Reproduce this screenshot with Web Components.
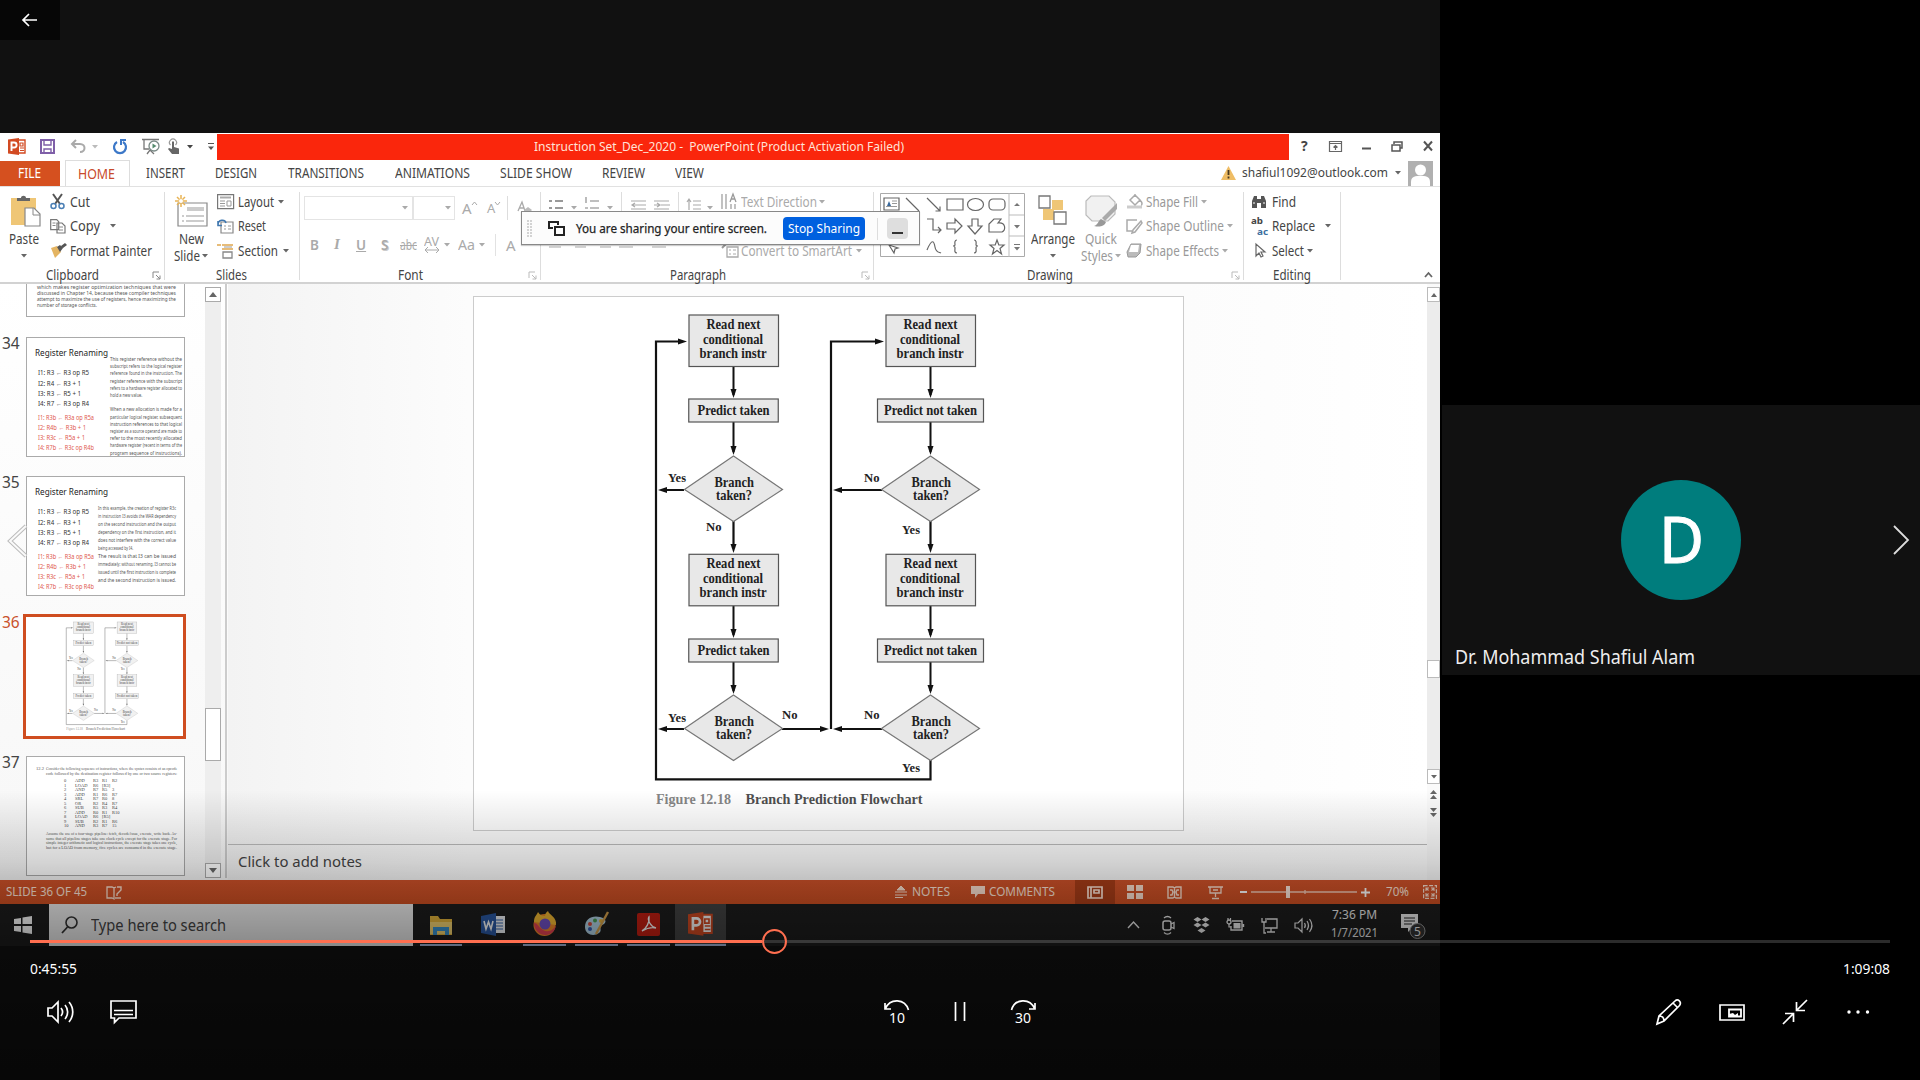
<!DOCTYPE html>
<html lang="en"><head><meta charset="utf-8"><title>Lecture recording</title>
<style>
html,body{margin:0;width:1920px;height:1080px;overflow:hidden;background:#000;font-family:"Noto Sans","Open Sans",sans-serif}
</style></head><body>
<lecture-player></lecture-player>
<script>
const BASE=`*{box-sizing:border-box}:host{display:block;flex:none}.row{display:flex;align-items:center}.c{flex:none;display:flex;align-items:center}svg{display:block;flex:none;overflow:visible}`;
const define=(name,css,html)=>customElements.define(name,class extends HTMLElement{
  constructor(){super();const r=this.attachShadow({mode:'open'});r.innerHTML=`<style>${BASE}${css}</style>`+(typeof html==='function'?html(this):html)}
});
// A label squeezed or stretched to a given width
customElements.define('fit-text',class extends HTMLElement{
  constructor(){super();this.attachShadow({mode:'open'}).innerHTML=`<style>:host{display:block;flex:none;white-space:nowrap}span{display:inline-block;transform-origin:0 50%}</style><span><slot></slot></span>`}
  connectedCallback(){const w=+this.getAttribute('w');this.style.width=w+'px';const s=this.shadowRoot.querySelector('span');const n=s.offsetWidth;if(n){s.style.transform=`scaleX(${w/s.getBoundingClientRect().width})`}}
});
const svg=(w,h,inner,extra='')=>`<svg width="${w}" height="${h}" viewBox="0 0 ${w} ${h}" fill="none" ${extra}>${inner}</svg>`;
const t=(w,s,style='')=>`<fit-text w="${w}" style="${style}">${s}</fit-text>`;
const row=(h,items,start=0,style='')=>{let x=start;return `<div class="row" style="height:${h}px;${style}">`+items.map(([a,w,html,st=''])=>{const m=a-x;x=a+w;return `<div class="c" style="margin-left:${m}px;width:${w}px;${st}">${html}</div>`}).join('')+'</div>'};
const tri=(c='#666')=>svg(6,4,`<path d="M0 0h6L3 3.5z" fill="${c}"/>`);
const launcher=(c='#888')=>svg(9,9,`<path d="M1 7V1h6M4 4l4 4M8 4.5V8H4.5" stroke="${c}"/>`);

/* ---------- title bar ---------- */
const pIcon=`<path d="M10 2h7v13h-7z" fill="#fff" stroke="#d24a22" stroke-width="1.4"/><path d="M12 5h3v3h-3zM12 10h4M12 12.5h4" stroke="#d24a22" stroke-width="1.2"/><path d="M0 1.6L11 0v17L0 15.4z" fill="#d24a22"/><path d="M3.5 13V4.500h2.600a2.400 2.400 0 0 1 0 5H3.500" stroke="#fff" stroke-width="1.900"/>`;
define('ppt-titlebar',`:host{height:27px;background:#fff}`,
 row(27,[
 [8,17,svg(17,17,pIcon)],
 [40,15,svg(15,15,'<path d="M1 1h13v13H1z" stroke="#7f5fa8" stroke-width="2"/><path d="M4 1v5h7V1M4 14v-4h7v4" stroke="#7f5fa8" stroke-width="1.4"/>')],
 [70,17,svg(17,15,'<path d="M6 1L2 5l4 4M2 5h8c6 0 6 8 0 8" stroke="#aaa" stroke-width="2"/>')],
 [92,6,tri('#bbb')],
 [112,16,svg(16,16,'<path d="M5 3a6 6 0 1 0 6 0" stroke="#3c78c8" stroke-width="2.200"/><path d="M9 6V1h5" stroke="#3c78c8" stroke-width="2"/>')],
 [142,19,svg(19,17,'<path d="M0 1.500h17M2 2v9h5M5 16l3-4 4 4" stroke="#777" stroke-width="1.300"/><circle cx="12" cy="8" r="5" stroke="#7a8a86" stroke-width="1.300" fill="#fff"/><path d="M10.500 5.500v5l4-2.500z" fill="#558b6e"/>')],
 [167,14,svg(14,17,'<path d="M3.500 7a3.500 3.500 0 1 1 5 0" stroke="#999" stroke-width="1.200"/><path d="M5 3.500h2V9l5 1.500V16H5L1 11l1-1 3 1z" fill="#666"/>')],
 [187,6,tri('#444')],
 [208,6,svg(6,8,'<path d="M0 .5h6" stroke="#555"/><path d="M0 3.500h6L3 7z" fill="#555"/>')],
 [217,1072,`<div style="padding-left:317px">${t(370,'Instruction Set_Dec_2020 -&nbsp; PowerPoint (Product Activation Failed)')}</div>`,'height:26px;background:#fa260c;color:#ffe3d8;font-size:12.5px'],
 [1301,9,`<b style="font-size:14px;line-height:20px;margin-top:-2px;color:#444">?</b>`],
 [1329,13,svg(13,11,'<path d="M.5.5h12v10H.5zM.5 2.500h12M6.500 9V5M4.500 6.500l2-2 2 2" stroke="#666" stroke-width="1.200"/>')],
 [1362,9,svg(9,11,'<path d="M0 7.500h9" stroke="#555" stroke-width="2"/>')],
 [1391,12,svg(12,11,'<path d="M3 3V1h8v6H9M1 4h8v6H1z" stroke="#555" stroke-width="1.500"/>')],
 [1423,10,svg(10,10,'<path d="M1 .5l8 9M9 .5l-8 9" stroke="#555" stroke-width="2"/>','style="margin-top:-2px"')]
 ]));
define('ppt-tabs',`:host{height:26px;background:#fff;color:#444;font-size:13.500px}`,
 row(26,[
 [0,60,`<div style="padding-left:18px">${t(23,'FILE')}</div>`,'height:25px;background:#d5501f;color:#fff'],
 [65,65,`<div style="padding-left:12px;color:#c8492a">${t(37,'HOME')}</div>`,'height:26px;border:1px solid #ddd;border-bottom:0'],
 [146,39,t(39,'INSERT')],[215,42,t(42,'DESIGN')],[288,76,t(76,'TRANSITIONS')],[395,75,t(75,'ANIMATIONS')],[500,72,t(72,'SLIDE SHOW')],[602,43,t(43,'REVIEW')],[675,29,t(29,'VIEW')],
 [1221,15,svg(15,14,'<path d="M7.500 0L15 14H0z" fill="#efbd65"/><path d="M7.500 4v5M7.500 10.500v2" stroke="#4a3a20" stroke-width="1.800"/>')],
 [1242,146,t(146,'shafiul1092@outlook.com','font-size:13px;margin-top:-2px')],[1395,6,tri()],
 [1408,25,svg(25,25,'<path d="M0 0h25v25H0z" fill="#b0b0b0"/><circle cx="12.500" cy="9" r="5.500" fill="#fff"/><path d="M3 25v-4c0-6 5-6 9.500-6s9.500 0 9.500 6v4z" fill="#fff"/>')]
 ]));

/* ---------- ribbon ---------- */
define('ribbon-group',`:host{height:98px;display:flex;flex-direction:column}
.body{height:80px;padding-top:3.500px;display:flex}.foot{height:18px;display:flex;align-items:center}
:host([line]) {background:linear-gradient(#ddd,#ddd) right 6px/1px 88px no-repeat}`,
 `<div class="body"><slot></slot></div><div class="foot"><slot name="foot"></slot></div>`);
const big=(ml,w,icon,l1,l2,color='#444')=>`<div style="margin-left:${ml}px;width:${w}px;padding-top:5px;display:flex;flex-direction:column;align-items:center;color:${color}"><div style="height:36px">${icon}</div><div style="height:17px;display:flex;align-items:center">${l1}</div><div style="height:17px;display:flex;align-items:center;gap:2px">${l2}</div></div>`;
const col=(ml,rows,color='inherit')=>`<div style="margin-left:${ml}px;color:${color}">${rows}</div>`;
const H=24.5;
const foot=(items,start)=>`<div slot="foot">${row(18,items,start)}</div>`;
const G='#aaa';
define('ppt-ribbon',`:host{height:98px;background:#fff;border-top:1px solid #e1e1e1;border-bottom:2px solid #d2d2d2;color:#444;font-size:13.500px;display:flex}ribbon-group{margin-top:-1px}.c b{font-weight:600}`,
`<ribbon-group line style="width:165px">
${big(7,34,svg(32,32,'<path d="M1 3h25v27H1z" fill="#efc676"/><path d="M7 6V3h4c0-3 5-3 5 0h4v3z" fill="#666"/><path d="M15 13h9l6 6v12H15z" fill="#fff" stroke="#888" stroke-width="1.200"/><path d="M23 13v7h7" stroke="#888"/>','style="margin-left:3px"'),t(30,'Paste'),tri())}
${col(9,row(H,[[50,16,svg(16,15,'<path d="M3 0l7 10M12 0L5 10" stroke="#555" stroke-width="2"/><circle cx="3.500" cy="12" r="2.500" stroke="#4a7fb5" stroke-width="1.500"/><circle cx="11.500" cy="12" r="2.500" stroke="#4a7fb5" stroke-width="1.500"/>')],[70,20,t(20,'Cut')]],50)
+row(H,[[50,16,svg(16,15,'<path d="M.7.7h6l2 2v8h-8zM7 4h5l3 3v7H7z" stroke="#777" stroke-width="1.200" fill="#fff"/><path d="M2.500 4h3M2.500 6.500h3M9 8h4M9 11h4" stroke="#888"/>')],[70,30,t(30,'Copy')],[110,6,tri()]],50)
+row(H,[[50,17,svg(17,15,'<path d="M1 5l6-2 4 6-6 6z" fill="#e4b462"/><path d="M7 4l3-2 3 3-3 4zM11 3l4-3 2 2-4 3z" fill="#555"/>')],[70,82,t(82,'Format Painter')]],50))}
${foot([[46,53,t(53,'Clipboard')],[152,9,launcher()]],0)}
</ribbon-group>
<ribbon-group line style="width:135px">
${big(9,34,svg(33,32,'<path d="M3 8h29v23H3z" fill="#fff" stroke="#888" stroke-width="1.200"/><path d="M12 14h17" stroke="#ccc" stroke-width="4"/><path d="M7 21h2M11 21h18M7 26h2M11 26h18" stroke="#999"/><path d="M6 0v12M0 6h12M2 2l8 8M10 2l-8 8" stroke="#e9b455" stroke-width="1.500"/><circle cx="6" cy="6" r="2" fill="#fff"/>'),t(25,'New'),t(26,'Slide')+tri())}
${col(9,row(H,[[217,17,svg(17,15,'<path d="M.6.6h16v14H.6z" stroke="#777" stroke-width="1.200"/><path d="M3 3.500h11" stroke="#aaa" stroke-width="2"/><path d="M3 7h5M3 9.500h5M3 12h5M10 7h4v5h-4z" stroke="#999"/>')],[238,36,t(36,'Layout')],[278,6,tri()]],217)
+row(H,[[217,17,svg(17,15,'<path d="M4 3h12v11H4z" stroke="#888" stroke-width="1.200"/><path d="M7 7h2M11 7h3M7 10h2M11 10h3" stroke="#999"/><path d="M1 6c0-6 7-6 8-2M1 2v4.500h4" stroke="#3f77b0" stroke-width="1.600"/>')],[238,28,t(28,'Reset')]],217)
+row(H,[[217,17,svg(17,16,'<path d="M5 2h11M5 6h11M0 2h4" stroke="#e0a64e" stroke-width="1.600"/><path d="M6 9h9v6H6z" stroke="#888" stroke-width="1.300"/><path d="M7 4h8" stroke="#999"/>')],[238,40,t(40,'Section')],[283,6,tri()]],217))}
${foot([[216,31,t(31,'Slides')]],165)}
</ribbon-group>
<ribbon-group line style="width:241px;color:${G}">
<div>
${row(37,[[304,109,`<div style="margin-left:97px">${tri(G)}</div>`,'height:24px;border:1px solid #e4e4e4'],[413,42,`<div style="margin-left:31px">${tri(G)}</div>`,'height:24px;border:1px solid #e4e4e4'],[462,16,`<span style="font-size:15px">A</span>${svg(5,12,'<path d="M0 3l2.500-3L5 3" stroke="#aaa"/>')}`],[487,14,`<span style="font-size:13px">A</span>${svg(5,12,'<path d="M0 0l2.500 3L5 0" stroke="#aaa"/>')}`],[507,1,'','height:24px;background:#ddd'],[518,14,svg(14,14,'<path d="M0 10L4 1l3 9M1.500 7h5" stroke="#aaa" stroke-width="1.300"/><path d="M6 9l4-3 4 3-4 4H7z" fill="#bbb"/>')]],300)}
${row(36,[[310,9,`<b>B</b>`],[334,8,`<i style="font-family:'Liberation Serif';font-weight:bold;font-size:15px">I</i>`],[356,10,`<u><b>U</b></u>`],[381,9,`<b style="text-shadow:1px 1px #ccc">S</b>`],[400,17,t(17,'<s>abc</s>')],[424,17,`<div>${t(15,'AV','font-size:12px;line-height:11px')}${svg(16,6,'<path d="M1 3h14M4 0L1 3l3 3M12 0l3 3-3 3" stroke="#aaa"/>')}</div>`],[444,6,tri(G)],[458,17,t(17,'Aa')],[479,6,tri(G)],[495,1,'','height:22px;background:#e2e2e2'],[506,10,'<span style="font-size:15px">A</span>']],300)}
</div>
${foot([[398,25,t(25,'Font','color:#444')],[528,9,launcher('#bbb')]],300)}
</ribbon-group>
<ribbon-group line style="width:333px;color:${G}">
<div>
${row(H,[[549,14,svg(14,16,'<path d="M0 7h3M6 7h8M0 14h3M6 14h8" stroke="#999" stroke-width="1.800"/>')],[571,6,svg(6,16,'<path d="M0 12h6l-3 3.500z" fill="#aaa"/>')],[585,14,svg(14,16,'<path d="M1 3v6M0 14h3M5 7h9M5 14h9" stroke="#aaa" stroke-width="1.600"/>')],[607,6,svg(6,16,'<path d="M0 12h6l-3 3.500z" fill="#aaa"/>')],[621,1,'','height:20px;background:#ddd'],[631,15,svg(15,16,'<path d="M0 7h15M6 11h9M0 15h15M1 11h5M4 9L1 11l3 2" stroke="#aaa" stroke-width="1.200"/>')],[654,16,svg(16,16,'<path d="M0 7h15M7 11h9M0 15h15M0 11h5M3 9l3 2-3 2" stroke="#aaa" stroke-width="1.200"/>')],[678,1,'','height:20px;background:#ddd'],[686,15,svg(15,16,'<path d="M3 6v10M1 8l2-3 2 3M7 7h8M7 11h8M7 15h8" stroke="#aaa" stroke-width="1.200"/>')],[707,6,svg(6,16,'<path d="M0 12h6l-3 3.500z" fill="#aaa"/>')],[721,17,svg(17,16,'<path d="M1 0v15M5 0v15M10 10v5M14 10v5" stroke="#999" stroke-width="1.200"/><path d="M9 8l3-8 3 8M10 5h4" stroke="#999" stroke-width="1.300"/>')],[741,76,t(76,'Text Direction')],[819,6,tri(G)]],541)}
${row(H,[],541)}
${row(H,[[549,12,svg(12,10,'<path d="M0 1h12" stroke="#aaa"/>')],[575,11,svg(11,10,'<path d="M0 1h11" stroke="#aaa"/>')],[600,11,svg(11,10,'<path d="M0 1h11" stroke="#aaa"/>')],[619,14,svg(14,10,'<path d="M0 1h14" stroke="#aaa"/>')],[652,14,svg(14,10,'<path d="M0 1h14" stroke="#aaa"/>')],[722,17,svg(17,14,'<path d="M5 3h11v10H5z" stroke="#aaa" stroke-width="1.300"/><path d="M7 6h2M11 6h3M7 10h2M11 10h3" stroke="#aaa"/><path d="M0 4l4-4" stroke="#999" stroke-width="2"/>')],[741,111,t(111,'Convert to SmartArt')],[856,6,tri(G)]],541)}
</div>
${foot([[670,56,t(56,'Paragraph','color:#444')],[861,9,launcher('#bbb')]],541)}
</ribbon-group>
<ribbon-group line style="width:370px">
<div style="margin:3px 0 0 6px">${svg(145,64,`<path d="M.5.5h144v63H.5z" stroke="#aaa"/><path d="M129 0v64M129 22h15M129 43h15" stroke="#bbb"/><path d="M134 13l3-3 3 3zM134 32h6l-3 3.500zM134 54h6l-3 3.500z" fill="#777"/><path d="M134 51.500h6" stroke="#777"/>
<g stroke="#666" stroke-width="1.200"><path d="M4 5h15v12H4z"/><path d="M12 8h5M12 10.500h5M6 13.500h11" stroke="#999"/><path d="M7 13l2-5 2 5z" fill="#39699c" stroke="none"/><path d="M26 5l13 13M47 5l13 13M60 13.500V18h-4.500M67 6h16v11H67z"/><ellipse cx="95.500" cy="11.500" rx="8" ry="6"/><rect x="109" y="6" width="16" height="11" rx="4"/>
<path d="M47 26h6v11h8M58 34l3 3-3 3M67 30h8v-4l7 7-7 7v-4h-8zM92 26h6v7h4l-7 8-7-8h4zM109 39V31l5-5h7l-3 4c8-1 8 7 4 9z"/><path d="M47 57c5-12 7-9 8-3s4 5 6 6M77 47c-3 0-2 4-2 5s-2 1-2 1 2 0 2 2-1 5 2 5M94 47c3 0 2 4 2 5s2 1 2 1-2 0-2 2 1 5-2 5" /><path d="M117 47l1.800 5h5.200l-4 3.500 1.500 5.500-4.500-3.500-4.500 3.500 1.500-5.500-4-3.500h5.200zM9 52l5 8 1-4 3-1z"/></g>`)}</div>
${big(5,45,svg(30,30,'<path d="M14 5h11v10H14zM5 14h11v11H5z" fill="#efc676"/><path d="M1 1h11v12H1zM16 17h12v12H16z" fill="#fff" stroke="#777" stroke-width="1.300"/>'),t(44,'Arrange'),tri())}
${big(6,40,svg(33,33,'<path d="M6 1h18l6 6v12l-7 7H7l-6-6V6z" fill="#f1f1f1" stroke="#bbb" stroke-width="1.200"/><path d="M32 8L17 23l3 3L32 14z" fill="#aaa"/><path d="M16 24l5 3c-2 5-7 5-12 4 4-1 4-5 7-7z" fill="#999"/>'),t(32,'Quick'),t(32,'Styles')+tri(G),'#999')}
${col(5,row(H,[[1127,17,svg(17,16,'<path d="M1 13h15" stroke="#ccc" stroke-width="3"/><path d="M4 6l5-5 5 5-5 5zM9 1V0M14 6c3 3 2 5 1 5" stroke="#aaa" stroke-width="1.500"/>')],[1147,52,t(52,'Shape Fill')],[1202,6,tri(G)]],1127)
+row(H,[[1127,17,svg(17,15,'<path d="M11 1H1v11h5M15 2L7 11l-1 3 3-1 7-9z" stroke="#aaa" stroke-width="1.500"/>')],[1147,78,t(78,'Shape Outline')],[1228,6,tri(G)]],1127)
+row(H,[[1127,17,svg(17,15,'<path d="M5 1h10l-1 9-4 4H2L1 9z" fill="#bbb" stroke="#999"/><path d="M5 2h8l-1 7H3z" fill="#fff"/>')],[1147,73,t(73,'Shape Effects')],[1223,6,tri(G)]],1127),'#999')}
${foot([[1027,46,t(46,'Drawing')],[1231,9,launcher('#bbb')]],874)}
</ribbon-group>
<ribbon-group line style="width:97px">
${col(7,row(H,[[1251,16,svg(16,15,'<path d="M1 7l2-5h3v3h4V2h3l2 5v7h-5V9H6v5H1z" fill="#555"/><path d="M2 9h2M12 9h2" stroke="#fff"/>')],[1272,24,t(24,'Find')]],1251)
+row(H,[[1251,17,`<div style="font-size:8px;line-height:11px;font-weight:bold"><div style="height:11px">${t(12,'ab')}</div><div style="height:11px;padding-left:6px;color:#3d6f9f">${t(11,'ac')}</div></div>`],[1272,43,t(43,'Replace')],[1325,6,tri()]],1251)
+row(H,[[1255,11,svg(11,15,'<path d="M1 1v12l3-3 2 4 2-1-2-4h4z" stroke="#666" stroke-width="1.200"/>')],[1272,32,t(32,'Select')],[1307,6,tri()]],1251))}
${foot([[1273,38,t(38,'Editing')]],1244)}
</ribbon-group>
<ribbon-group style="width:99px">
${foot([[1424,9,svg(9,6,'<path d="M1 5l3.500-4L8 5" stroke="#666" stroke-width="1.800"/>')]],1341)}
</ribbon-group>`);

/* ---------- flow chart ---------- */
const st=(x,w,y,s,sz=14)=>`<text x="${x}" y="${y}" textLength="${w}" lengthAdjust="spacingAndGlyphs" font-size="${sz}">${s}</text>`;
const arrow=(x,y,d)=>({d:`<path d="M${x} ${y}l-3-9h6z"/>`,l:`<path d="M${x} ${y}l9-3v6z"/>`,r:`<path d="M${x} ${y}l-9-3v6z"/>`}[d]).replace('/>',' fill="#111" stroke="none"/>');
const column=(cx,pl,pw,ptxt)=>{let s='';for(const [a,b,c] of [[315,399,456],[554.3,639,695]]){
 s+=`<path d="M${cx} ${a+51}V${b-4}M${cx} ${b+23}V${c-4}" stroke="#111" stroke-width="2"/>`+arrow(cx,b-1,'d')+arrow(cx,c-1,'d')
 +`<rect x="${cx-44.5}" y="${a}" width="89.500" height="51.500" fill="#e8e8e8" stroke="#555" stroke-width="1.200"/><rect x="${cx-pw/2}" y="${b}" width="${pw}" height="23" fill="#e8e8e8" stroke="#555" stroke-width="1.200"/><path d="M${cx} ${c}l49 33.500-49 32-49-32z" fill="#e8e8e8" stroke="#777" stroke-width="1.200"/>`
 +st(cx-27,54,a+14,'Read next')+st(cx-30.5,60,a+28.5,'conditional')+st(cx-34,67,a+42.7,'branch instr')+st(cx-pl/2,pl,b+15.7,ptxt)+st(cx-19,39.5,c+30.5,'Branch')+st(cx-17.5,36,c+44,'taken?')}
 return s};
define('flow-chart',`:host{width:710px;height:534px}svg{width:100%;height:100%}text{font-family:"Liberation Serif",serif;font-weight:bold;fill:#222}`,
`<svg viewBox="474 297 710 534" fill="none">
<path d="M680 341.500H656V779.300H930.500V760M878 341.500H831V729M733.500 521V548M930.500 521V548M684 490H664M882 490H840M684 729H664M782 729H822M882 729H840" stroke="#111" stroke-width="2.200"/>
${arrow(687,341.5,'r')}${arrow(884,341.5,'r')}${arrow(733.5,553,'d')}${arrow(930.5,553,'d')}${arrow(658,490,'l')}${arrow(833,490,'l')}${arrow(658,729,'l')}${arrow(833,729,'l')}${arrow(829,729,'r')}
${column(733.5,72,89.5,'Predict taken')}${column(930.5,93,106,'Predict not taken')}
${st(668,18,482,'Yes',13.5)}${st(706,15.500,531,'No',13.5)}${st(864,15.500,482,'No',13.5)}${st(902,18,534,'Yes',13.5)}${st(668,18,721.5,'Yes',13.5)}${st(782,15.500,718.5,'No',13.5)}${st(864,15.500,718.5,'No',13.5)}${st(902,18,771.5,'Yes',13.5)}
<g style="opacity:.55">${st(656,75,803.5,'Figure 12.18',15)}</g><g style="opacity:.8">${st(745.5,177,803.5,'Branch Prediction Flowchart',15)}</g></svg>`);

/* ---------- thumbnails ---------- */
const para=(x,w,y,dy,lines)=>lines.map((l,i)=>{if(!l)return '';const ww=l.length<23?w*.45:w,k=ww/(l.length*2.75);return `<g transform="translate(${x} ${y+i*dy}) scale(${k.toFixed(3)} 1)"><text textLength="${(ww/k).toFixed(2)}" lengthAdjust="spacingAndGlyphs" font-size="4.600" fill="#555">${l}</text></g>`}).join('');
const instr=(a)=>a.map(([y,s,c,w])=>`<text x="11" y="${y}" textLength="${w}" lengthAdjust="spacingAndGlyphs" font-size="6.200" fill="${c}">${s}</text>`).join('');
const list=instr([[37,'I1: R3 ← R3 op R5','#333',51],[47.5,'I2: R4 ← R3 + 1','#333',43],[57.500,'I3: R3 ← R5 + 1','#333',43],[68,'I4: R7 ← R3 op R4','#333',51],[82,'I1: R3b ← R3a op R5a','#e05a50',56],[92,'I2: R4b ← R3b + 1','#e05a50',48],[101.500,'I3: R3c ← R5a + 1','#e05a50',47],[112,'I4: R7b ← R3c op R4b','#e05a50',56]]);
const title='<text x="8" y="18" textLength="73" lengthAdjust="spacingAndGlyphs" font-size="8.500" fill="#222">Register Renaming</text>';
const th=(n,h,inner,hot=false,x='')=>`<div class="r ${hot?'rh':''}"><div class="n">${n}</div><div class="${hot?'hot':'th'}" style="height:${h}px;${x}">${inner}</div></div>`;
const btn=(d)=>`<div class="b">${svg(8,5,d>0?'<path d="M0 0h8L4 5z" fill="#666"/>':'<path d="M0 5h8L4 0z" fill="#666"/>')}</div>`;
define('slide-strip',`:host{width:228px;height:596px;display:flex;background:linear-gradient(#fff,#f7f7f7);overflow:hidden}
.list{width:205px;display:flex;flex-direction:column;gap:19.500px;flex:none}.r{display:flex}.rh{margin:-2px 0 -2.500px}.n{width:26px;padding-left:2px;font-size:15.500px;line-height:20px;margin-top:-4px;color:#444;flex:none}.rh .n{color:#c9512b;margin-top:-2px}.th{width:159px;border:1px solid #aaa;background:#fff}.hot{width:163px;margin-left:-3px;border:3px solid #cf4d20;background:#fff;padding-top:1px}
.sb{width:16px;margin-top:3px;height:591px;background:#eee;display:flex;flex-direction:column;align-items:center}.b,.thumb{width:16px;height:15px;border:1px solid #aaa;background:#fff;display:flex;align-items:center;justify-content:center}.thumb{height:53px}.sp{flex:1}
.line{width:2px;background:#ccc;margin-left:4px;height:594px}flow-chart{width:157px;height:118px;opacity:.6}svg text{font-family:"Noto Sans"}.se text{font-family:"Liberation Serif"}`,
`<div class="list">
${th('',33,svg(157,32,para(10,139,5,6,['which makes register optimization techniques that were','discussed in Chapter 14, because these compiler techniques','attempt to maximize the use of registers, hence maximizing the'])+para(10,60,23,6,['number of storage conflicts.'])),false,'border-top:0')}
${th('34',120,svg(157,118,title+list+para(83,72,23,7.2,['This register reference without the','subscript refers to the logical register','reference found in the instruction. The','register reference with the subscript','refers to a hardware register allocated to','hold a new value.','','When a new allocation is made for a','particular logical register, subsequent','instruction references to that logical','register as a source operand are made to','refer to the most recently allocated','hardware register (recent in terms of the','program sequence of instructions).'])))}
${th('35',120,svg(157,118,title+list+para(71,78,33,8,['In this example, the creation of register R3c','in instruction I3 avoids the WAR dependency','on the second instruction and the output','dependency on the first instruction, and it','does not interfere with the correct value','being accessed by I4.','The result is that I3 can be issued','immediately; without renaming, I3 cannot be','issued until the first instruction is complete','and the second instruction is issued.'])))}
${th('36',125,'<flow-chart></flow-chart>',true)}
${th('37',120,`<div class="se">${svg(157,118,`<text x="9" y="13" font-size="4.600" fill="#555">12.2</text>`+para(19,131,13,4.8,['Consider the following sequence of instructions, where the syntax consists of an opcode','code followed by the destination register followed by one or two source registers:'])
+['ADD,R3;R1;R2','LOAD,R6;[R3];','AND,R7;R5;3','ADD,R1;R6;R7','SRL,R7;R0;8','OR,R2;R4;R7','SUB,R5;R3;R4','ADD,R0;R1;R10','LOAD,R6;[R5];','SUB,R2;R1;R6','AND,R3;R7;15'].map((s,i)=>{const[a,b]=s.split(',');const q=b.split(';');return `<g font-size="4.500" fill="#444"><text x="37" y="${25+i*4.5}">${i}</text><text x="48" y="${25+i*4.5}">${a}</text><text x="66" y="${25+i*4.5}">${q[0]}</text><text x="75" y="${25+i*4.5}">${q[1]}</text><text x="85" y="${25+i*4.5}">${q[2]}</text></g>`}).join('')
+para(19,131,78,4.6,['Assume the use of a four-stage pipeline: fetch, decode/issue, execute, write back. As-','sume that all pipeline stages take one clock cycle except for the execute stage. For','simple integer arithmetic and logical instructions, the execute stage takes one cycle,','but for a LOAD from memory, five cycles are consumed in the execute stage.']))}</div>`)}
</div><div class="sb">${btn(-1)}<div style="height:406px"></div><div class="thumb"></div><div class="sp"></div>${btn(1)}</div><div class="line"></div>`);

define('slide-stage',`:host{width:1212px;height:596px;display:flex;background:#fafafa}
.m{width:1199px;flex:none;background:linear-gradient(90deg,#f3f3f3,#fcfcfc 20%,#fcfcfc 80%,#fff)}.s{margin:12px 0 0 245px;width:711px;height:535px;border:1px solid #ccc;background:#fff}.notes{border-top:1px solid #bbb;margin-top:13px;height:36px;padding:0 0 3px 10px;display:flex;align-items:center;font-size:14.500px;color:#444}
.sb{width:13px;height:557px;display:flex;flex-direction:column;margin-top:3px}.tr{background:#ececec}.b{height:15px;width:13px;border:1px solid #bbb;background:#fff;display:flex;align-items:center;justify-content:center}.j{display:flex;justify-content:center}`,
`<div class="m"><div class="s"><flow-chart></flow-chart></div><div class="notes">${t(124,'Click to add notes')}</div></div>
<div class="sb"><div class="b">${svg(6,4,'<path d="M0 4h6L3 0z" fill="#666"/>')}</div><div class="tr" style="height:358px"></div><div class="b" style="height:18px"></div><div class="tr" style="height:91px"></div><div class="b">${tri()}</div><div class="j" style="height:18px;padding-top:6px">${svg(7,9,'<path d="M0 4h7L3.500 0zM0 9h7L3.500 5z" fill="#666"/>')}</div><div class="j" style="height:18px;padding-top:6px">${svg(7,9,'<path d="M0 0h7L3.500 4zM0 5h7L3.500 9z" fill="#666"/>')}</div></div>`);

/* ---------- status bar and taskbar ---------- */
define('ppt-status',`:host{height:24px;background:linear-gradient(#d0522a,#cf5022);color:#ffe6d8;font-size:12px}fit-text{margin-top:-1px}`,
 row(24,[[6,81,t(81,'SLIDE 36 OF 45')],[106,17,svg(17,13,'<path d="M1 1h5l2 1v11l-2-1H1zM8 2l2-1" stroke="#fbe0d0" stroke-width="1.300"/><path d="M11 1h4v3l-4 4v2M9 12h6" stroke="#fbe0d0" stroke-width="1.400"/>')],
 [895,12,svg(12,12,'<path d="M6 0l4 4H2zM0 6h12M0 9h12M0 11.500h8" fill="#fbe0d0" stroke="#fbe0d0"/>')],[912,38,t(38,'NOTES')],[971,14,svg(14,12,'<path d="M0 0h14v8H7l-3 4V8H0z" fill="#fbe0d0"/>')],[989,66,t(66,'COMMENTS')],
 [1075,40,svg(16,13,'<path d="M1 1h14v11H1zM4 1v11M7 4h5v3H7z" stroke="#ffe6d8" stroke-width="1.700"/>'),'height:24px;background:#a93d18;justify-content:center'],
 [1127,16,svg(16,14,'<path d="M0 0h7v6H0zM9 0h7v6H9zM0 8h7v6H0zM9 8h7v6H9z" fill="#fbe0d0"/>')],
 [1167,15,svg(15,13,'<path d="M1 1h5l1.500 1L9 1h5v11H9l-1.500-1L6 12H1zM7.500 2v9M3 4h2l1 2-1 3H3M12 4h-2L9 6l1 3h2" stroke="#fbe0d0" stroke-width="1.400"/>')],
 [1208,15,svg(15,13,'<path d="M0 1h15M2 1v6h11V1M7.500 7v4M4 12.500h7M5 4h5" stroke="#fbe0d0" stroke-width="1.300"/>')],
 [1240,7,svg(7,2,'<path d="M0 1h7" stroke="#fff" stroke-width="2"/>')],
 [1251,106,svg(106,14,'<path d="M0 7h106M54 5v4" stroke="#f3c9b6" stroke-width="1.300"/><path d="M35 1h4v12h-4z" fill="#ffe8dd"/>')],
 [1361,9,svg(9,9,'<path d="M0 4.500h9M4.500 0v9" stroke="#fff" stroke-width="1.800"/>')],[1386,23,t(23,'70%')],
 [1423,14,svg(14,14,'<path d="M.6.6h12.800v12.800H.6z" stroke="#fbe0d0" stroke-width="1.200" stroke-dasharray="4 1.500"/><path d="M3 6V3h3M8 3h3v3M11 8v3H8M6 11H3V8M3 3l2.500 2.500M11 3L8.500 5.500M3 11l2.500-2.500M11 11L8.500 8.500" stroke="#fbe0d0" stroke-width="1.100"/>')]]));
const task=(icon,ul=true,w=42)=>`<div style="width:${w}px;height:42px;display:flex;flex-direction:column;align-items:center;justify-content:flex-end;gap:8px"><div>${icon}</div><div style="height:2px;width:${w}px;background:${ul?'#a6b8dc':'none'}"></div></div>`;
define('win-taskbar',`:host{height:42px;background:#1d1d1d;color:#eee;font-size:12.500px}`,
 row(42,[[14,18,svg(18,18,'<path d="M0 3l7-1v6H0zM8.500 1.500L18 0v8H8.500zM0 10h7v6l-7-1zM8.500 10H18v8l-9.500-1.500z" fill="#fff"/>')],
 [49,364,`<div style="margin-left:12px">${svg(17,18,'<circle cx="10.500" cy="6.500" r="5.500" stroke="#333" stroke-width="1.600"/><path d="M6.500 11L1 17" stroke="#333" stroke-width="1.800"/>')}</div><div style="margin-left:13px">${t(135,'Type here to search')}</div>`,'height:42px;background:#efefef;color:#444;font-size:16px'],
 [420,42,task(svg(24,22,'<path d="M1 2h8l2 3h12v16H1z" fill="#e8b83c"/><path d="M1 8h22v12H1z" fill="#f7d774"/><path d="M4 21v-8h16v8h-4v-4H8v4z" fill="#3a95d2"/>'))],
 [472,42,task(svg(25,23,'<path d="M13 3h11v17H13z" fill="#f4f7fc"/><path d="M15 7h7M15 10h7M15 13h7M15 16h7" stroke="#3265ad"/><path d="M0 3l15-3v23L0 20z" fill="#2b5aa6"/><path d="M3 8l2 8 2.500-7L10 16l2-8" stroke="#fff" stroke-width="1.600"/>'),false)],
 [523,43,task(svg(25,25,'<circle cx="12.500" cy="14" r="11" fill="#f58a27"/><path d="M2 11C2 5 5 4 6 1c2 3 4 4 7 4 0-3 2-4 3-5 1 4 9 6 8 14z" fill="#f7bd34"/><path d="M2 12c0 14 20 17 22 2-2 5-8 8-13 5-5-3-5-7-9-7z" fill="#e84355"/><circle cx="13" cy="13" r="5.500" fill="#7251c8"/>'),true,43)],
 [575,43,task(svg(25,24,'<path d="M1 15C1 7 8 3 16 5c7 2 7 6 2 8-4 2 1 5-3 8-5 4-14 2-14-6z" fill="#b5d7ea"/><circle cx="6" cy="12" r="2" fill="#d74b3f"/><circle cx="11" cy="8.500" r="2" fill="#4ba357"/><circle cx="6" cy="17" r="2" fill="#365fb5"/><circle cx="17" cy="9" r="2" fill="#e8b43a"/><path d="M24 0L12 22" stroke="#d9a34c" stroke-width="2.400"/>'),true,43)],
 [627,43,task(svg(23,23,'<rect width="23" height="23" rx="2" fill="#c71f12"/><path d="M5 18c4-2 8-9 7-14-2 3 2 10 7 11-4-1-9 0-14 3z" stroke="#fff" stroke-width="1.400"/>'),true,43)],
 [675,51,task(svg(25,24,`<g transform="scale(1.400)">${pIcon}</g>`),true,51),'background:#434343'],
 [1127,13,svg(13,8,'<path d="M1 7l5.500-6L12 7" stroke="#eee" stroke-width="1.400"/>')],
 [1161,14,svg(14,18,'<rect x="2" y="5" width="8" height="9" rx="2" stroke="#eee" stroke-width="1.500"/><path d="M10 8l3-1.500v6L10 11M3 2c2-2 5-2 7 0M3 16.500c2 2 5 2 7 0" stroke="#eee" stroke-width="1.300"/>')],
 [1193,17,svg(17,16,'<path d="M4.500 0l4 2.500-4 2.500-4-2.500zM12.500 0l4 2.500-4 2.500-4-2.500zM4.500 5.500l4 2.500-4 2.500-4-2.500zM12.500 5.500l4 2.500-4 2.500-4-2.500zM8.500 11l4 2.500-4 2.500-4-2.500z" fill="#eee"/>')],
 [1226,18,svg(18,14,'<path d="M6 3h10v9H5V8M17.500 6v3" stroke="#eee" stroke-width="1.400"/><path d="M7.500 5h7v5.500h-7z" fill="#eee"/><circle cx="3" cy="4" r="2" stroke="#eee" stroke-width="1.300"/><path d="M3 6v3h2M2 0v2M4.500 0v2" stroke="#eee" stroke-width="1.200"/>')],
 [1261,17,svg(17,15,'<path d="M6 1h10v9H4M10 10v4M6 14h8M1 0v4h4V0M3 4v11h2" stroke="#eee" stroke-width="1.300"/>')],
 [1294,19,svg(19,15,'<path d="M1 5h3l4-4v13l-4-4H1zM10.500 5c1 1.500 1 3.500 0 5M13 3c2 3 2 6 0 9M15.500 1c3 4 3 9 0 13" stroke="#eee" stroke-width="1.200"/>')],
 [1331,47,`<div style="line-height:18.500px;margin-top:-2px"><div style="padding-left:1px">${t(45,'7:36 PM')}</div><div>${t(47,'1/7/2021')}</div></div>`],
 [1401,25,svg(25,22,'<path d="M0 0h17v14h-6l-4 4v-4H0z" fill="#eee"/><path d="M3 4h11M3 7h11M3 10h8" stroke="#222" stroke-width="1.200"/><circle cx="16.500" cy="17" r="7.500" fill="#333" stroke="#999"/><text x="16.500" y="21.500" text-anchor="middle" font-size="12" fill="#eee" font-family="Noto Sans">5</text>')]]));

define('share-bar',`:host{width:399px;height:34px;background:#fcfcfc;border:1px solid #888;box-shadow:0 1px 1px #0003;color:#222;font-size:12.500px}`,
 row(33,[[527,5,svg(5,17,'<path d="M0 1h5M0 4h5M0 7h5M0 10h5M0 13h5M0 16h5" stroke="#aaa" stroke-dasharray="2 1"/>')],[548,17,svg(17,15,'<path d="M5 7H1V1h9v3M7 6h9v8H7z" stroke="#222" stroke-width="2"/>')],[576,191,t(191,'You are sharing your entire screen.','-webkit-text-stroke:.25px #222')],[783,82,t(72,'Stop Sharing'),'height:23px;background:#0060df;border-radius:4px;color:#fff;justify-content:center'],[877,1,'','height:22px;background:#ddd'],[887,21,svg(11,13,'<path d="M0 11h11" stroke="#333" stroke-width="2"/>'),'height:21px;background:#dedede;border-radius:4px;justify-content:center']],522));

define('shared-screen',`:host{width:1440px;height:813px;position:relative;overflow:hidden;background:#fff}.mid{display:flex}share-bar{position:absolute;left:521px;top:78px}
.prev{position:absolute;left:8px;top:391px}`,
`<ppt-titlebar></ppt-titlebar><ppt-tabs></ppt-tabs><ppt-ribbon></ppt-ribbon><div class="mid"><slide-strip></slide-strip><slide-stage></slide-stage></div><ppt-status></ppt-status><win-taskbar></win-taskbar><share-bar></share-bar>
<div class="prev">${svg(20,34,'<path d="M18 2L2 17l16 15" stroke="#bbb" stroke-width="4"/><path d="M18 2L2 17l16 15" stroke="#fafafa" stroke-width="2"/>')}</div>`);

define('participant-tile',`:host{width:478px;height:270px;background:#111;display:flex;flex-direction:column;color:#eee}.top{height:236px;display:grid;grid-template-columns:179px 120px 1fr 28px;align-items:center;padding-top:34px}.av{width:120px;height:120px;border-radius:50%;background:#007d7d;color:#fff;display:flex;align-items:center;justify-content:center;font-size:63px;line-height:1;padding-bottom:3px;-webkit-text-stroke:1px #fff}.name{padding-left:13px;font-size:20px;height:34px;line-height:31px}`,
`<div class="top"><span></span><div class="av">${t(45,'D')}</div><span></span>${svg(18,30,'<path d="M2 1l14 14L2 29" stroke="#ddd" stroke-width="1.800"/>')}</div><div class="name">${t(240,'Dr. Mohammad Shafiul Alam')}</div>`);

const W='stroke="#fff" stroke-width="1.700"';
const skip=(n,flip)=>svg(26,26,`<g ${flip?'transform="matrix(-1 0 0 1 26 0)"':''}><path d="M1 4v6h6M1.500 9.500C6-1 21-1 24.500 11" ${W}/></g><text x="13" y="23.500" text-anchor="middle" textLength="16" lengthAdjust="spacingAndGlyphs" font-size="15" fill="#fff" font-family="Noto Sans">${n}</text>`);
define('player-controls',`:host{height:152px;display:flex;flex-direction:column;color:#fff;font-size:14.500px}.bar{display:flex;align-items:center;height:27px;margin:0 30px}.a{height:3px;width:732px;background:#ff6f50}.k{width:25px;height:25px;border:2px solid #ff6f50;border-radius:50%;flex:none;background:linear-gradient(transparent 9px,#333 9px 12px,transparent 12px)}.z{flex:1;height:3px;background:#ffffff2b}`,
`<div class="bar"><div class="a"></div><div class="k"></div><div class="z"></div></div>`
+row(26,[[30,47,t(47,'0:45:55')],[1843,47,t(47,'1:09:08')]])
+row(32,[[47,27,svg(27,24,`<path d="M1 8h4l6-6v20l-6-6H1zM14 8c2 2.500 2 5.500 0 8M18 5c3.500 4 3.500 10 0 14M22 2c5 6 5 14 0 20" ${W}/>`)],
[110,27,svg(27,24,`<path d="M1 1h25v17H9l-4.500 4.500V18H1zM4 10.500h19M4 14.500h19" ${W}/>`)],
[884,26,skip(10,false)],[954,12,svg(12,20,`<path d="M1.500 0v19M10.500 0v19" ${W}/>`)],[1010,26,skip(30,true)],
[1656,26,svg(26,26,`<path d="M1 25l2-8L19 2c3-3 7 1 4.500 4.500L8 22zM17 4l5 5M3 17c3 0 5 2 5 5" ${W}/>`)],
[1719,26,svg(26,17,`<path d="M1 1h24v15H1z" ${W}/><path d="M10 5.500h12v7H10z" stroke="#fff" stroke-width="1.800"/><path d="M10 10l4-1 2 2 3-2v4h-9z" fill="#fff"/>`)],
[1782,26,svg(26,26,`<path d="M1 25l10.500-10.500M3 14.500h8.500V23M25 1L14.500 11.500M14.500 3v8.500H23" ${W}/>`)],
[1846,24,svg(24,4,'<circle cx="3" cy="2" r="1.700" fill="#fff"/><circle cx="12" cy="2" r="1.700" fill="#fff"/><circle cx="21.500" cy="2" r="1.700" fill="#fff"/>')]],0,'margin-top:15px'));

define('lecture-player',`:host{width:1920px;height:1080px;position:relative;display:flex;background:#000}.left{width:1440px;height:1080px;background:#111;flex:none;display:flex;flex-direction:column}.head{height:133px}.back{width:60px;height:40px;background:#060606;display:flex;align-items:center;justify-content:center}
.right{width:480px;padding:405px 0 0 2px}.shade{position:absolute;left:0;right:0;top:790px;bottom:0;background:linear-gradient(#0000,#0000002b 72px,#00000050 115px,#0000006c 155px,#0009)}player-controls{position:absolute;left:0;right:0;top:928px}`,
`<div class="left"><div class="head"><div class="back">${svg(16,14,'<path d="M15 7H1.500M7 1L1 7l6 6" stroke="#fff" stroke-width="1.700"/>')}</div></div><shared-screen></shared-screen></div><div class="right"><participant-tile></participant-tile></div><div class="shade"></div><player-controls></player-controls>`);
</script></body></html>
